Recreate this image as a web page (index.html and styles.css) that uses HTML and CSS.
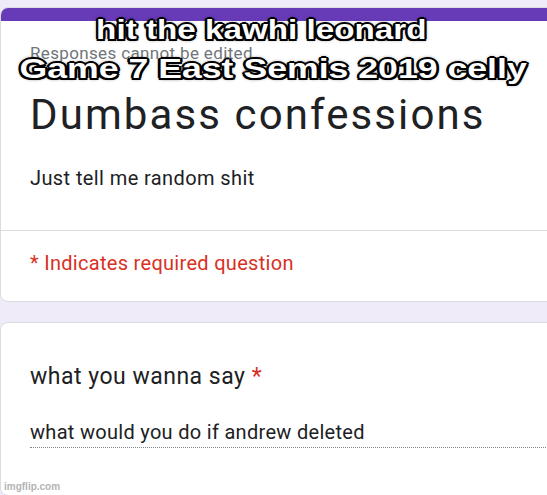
FILE: index.html
```html
<!DOCTYPE html>
<html>
<head>
<meta charset="utf-8">
<link rel="stylesheet" href="styles.css">
</head>
<body>
<main class="page">
  <section class="card card-head">
    <div class="accent"></div>
    <div class="head-body">
      <p class="notice">Responses cannot be edited</p>
      <h1 class="title">Dumbass confessions</h1>
      <p class="desc">Just tell me random shit</p>
    </div>
    <div class="required">* Indicates required question</div>
  </section>
  <section class="card card-q">
    <div class="question">what you wanna say <span class="star">*</span></div>
    <div class="answer">what would you do if andrew deleted</div>
  </section>
</main>
<div class="caption">
  <span class="cap-line cap-l1">hit the kawhi leonard</span>
  <span class="cap-line cap-l2">Game 7 East Semis 2019 celly</span>
</div>
<div class="watermark">imgflip.com</div>
</body>
</html>
```
FILE: styles.css
```css
html, body {
  margin: 0;
  padding: 0;
  overflow: hidden;
}
body {
  width: 547px;
  height: 495px;
  background: #f0ebf8;
  font-family: Roboto, "Liberation Sans", sans-serif;
  color: #202124;
  position: relative;
}
.page {
  padding-top: 7px;
}
.card {
  background: #fff;
  border: 1px solid #dadce0;
  border-radius: 8px;
  margin-right: -20px;
  overflow: hidden;
}
.accent {
  height: 14px;
  background: #673ab7;
  margin: -1px -1px 0 -1px;
}
.head-body {
  padding: 22px 0 40px 29px;
}
.notice {
  margin: 0;
  font-size: 17px;
  line-height: 20px;
  letter-spacing: 0.35px;
  color: #70757a;
}
.title {
  margin: 29px 0 0 0;
  font-weight: 400;
  font-size: 42px;
  line-height: 46px;
  letter-spacing: 2.1px;
  color: #202124;
}
.desc {
  margin: 28px 0 0 0;
  font-size: 20px;
  line-height: 24px;
  letter-spacing: 0.4px;
}
.required {
  border-top: 1px solid #dadce0;
  padding: 20px 0 26px 29px;
  font-size: 20px;
  line-height: 24px;
  letter-spacing: 0.3px;
  color: #d93025;
}
.card-q {
  margin-top: 20px;
  padding: 41px 0 47px 29px;
}
.question {
  font-size: 23px;
  line-height: 26px;
  letter-spacing: 0.5px;
}
.star {
  color: #d93025;
}
.answer {
  margin-top: 30px;
  padding-bottom: 3px;
  font-size: 20px;
  line-height: 24px;
  letter-spacing: 0.3px;
  border-bottom: 1px dotted #80868b;
}
.caption {
  position: absolute;
  top: 11px;
  left: 0;
  right: 0;
  display: flex;
  flex-direction: column;
  align-items: center;
  font-family: "Liberation Sans", Arial, sans-serif;
  font-weight: 700;
  font-size: 27px;
  line-height: 39px;
  color: #fff;
  text-shadow:
    2px 0 0 #000, -2px 0 0 #000, 0 2px 0 #000, 0 -2px 0 #000,
    1.5px 1.5px 0 #000, -1.5px 1.5px 0 #000, 1.5px -1.5px 0 #000, -1.5px -1.5px 0 #000,
    0 0 4px #000;
}
.cap-line {
  display: block;
  white-space: nowrap;
}
.cap-l1 {
  margin-right: 24px;
  transform: scaleX(1.23);
}
.cap-l2 {
  transform: scaleX(1.32);
}
.watermark {
  position: absolute;
  left: 4px;
  bottom: 3px;
  font-family: "Liberation Sans", Arial, sans-serif;
  font-weight: 700;
  font-size: 10px;
  color: #b4b4b4;
}
```
